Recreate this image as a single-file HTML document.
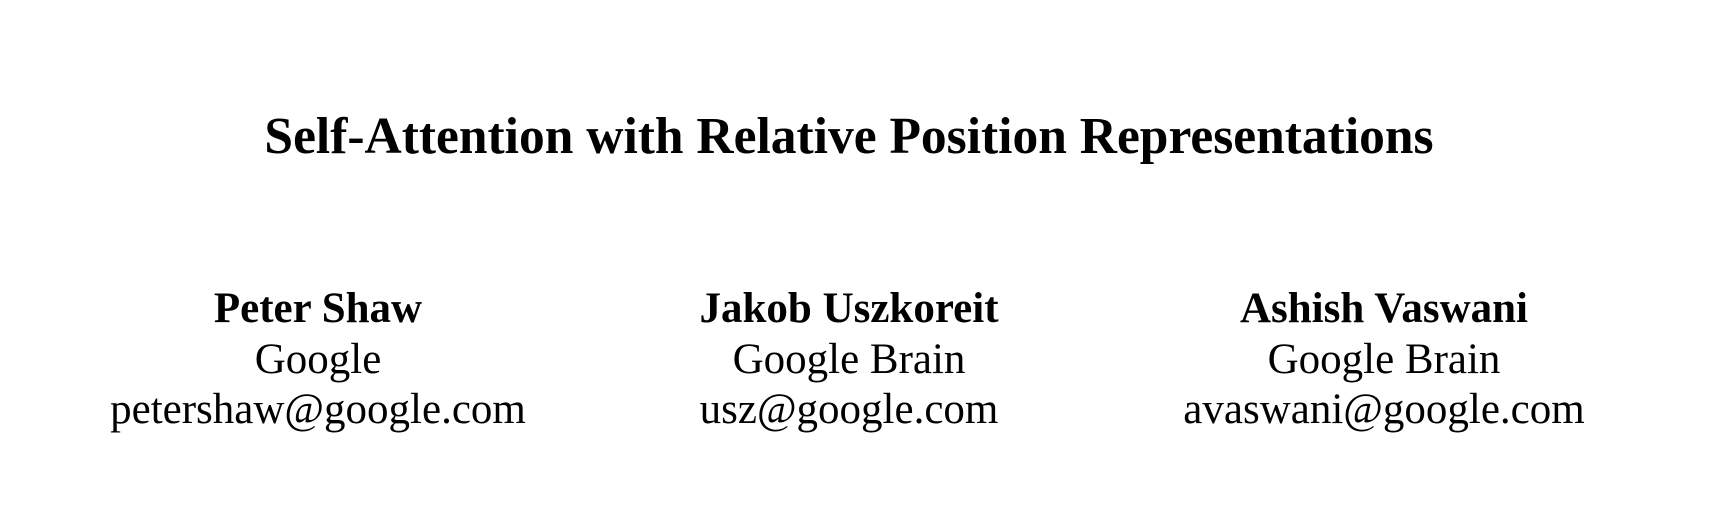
<!DOCTYPE html>
<html><head><meta charset="utf-8"><style>
html,body{margin:0;padding:0;background:#fff;width:1736px;height:530px;overflow:hidden;position:relative;font-family:"Liberation Serif",serif;color:#000}
.l{position:absolute;width:1400px;text-align:center;line-height:1;white-space:nowrap}
.t{font-size:51.5px;font-weight:bold}
.a{font-size:43px}
.b{font-weight:bold}
</style></head><body>
<div class="l t" style="left:149px;top:111px">Self-Attention with Relative Position Representations</div>

<div class="l a b" style="left:-382px;top:287px">Peter Shaw</div>
<div class="l a" style="left:-382px;top:338px">Google</div>
<div class="l a" style="left:-382px;top:388px">petershaw@google.com</div>

<div class="l a b" style="left:149px;top:287px">Jakob Uszkoreit</div>
<div class="l a" style="left:149px;top:338px">Google Brain</div>
<div class="l a" style="left:149px;top:388px">usz@google.com</div>

<div class="l a b" style="left:684px;top:287px">Ashish Vaswani</div>
<div class="l a" style="left:684px;top:338px">Google Brain</div>
<div class="l a" style="left:684px;top:388px">avaswani@google.com</div>
</body></html>
